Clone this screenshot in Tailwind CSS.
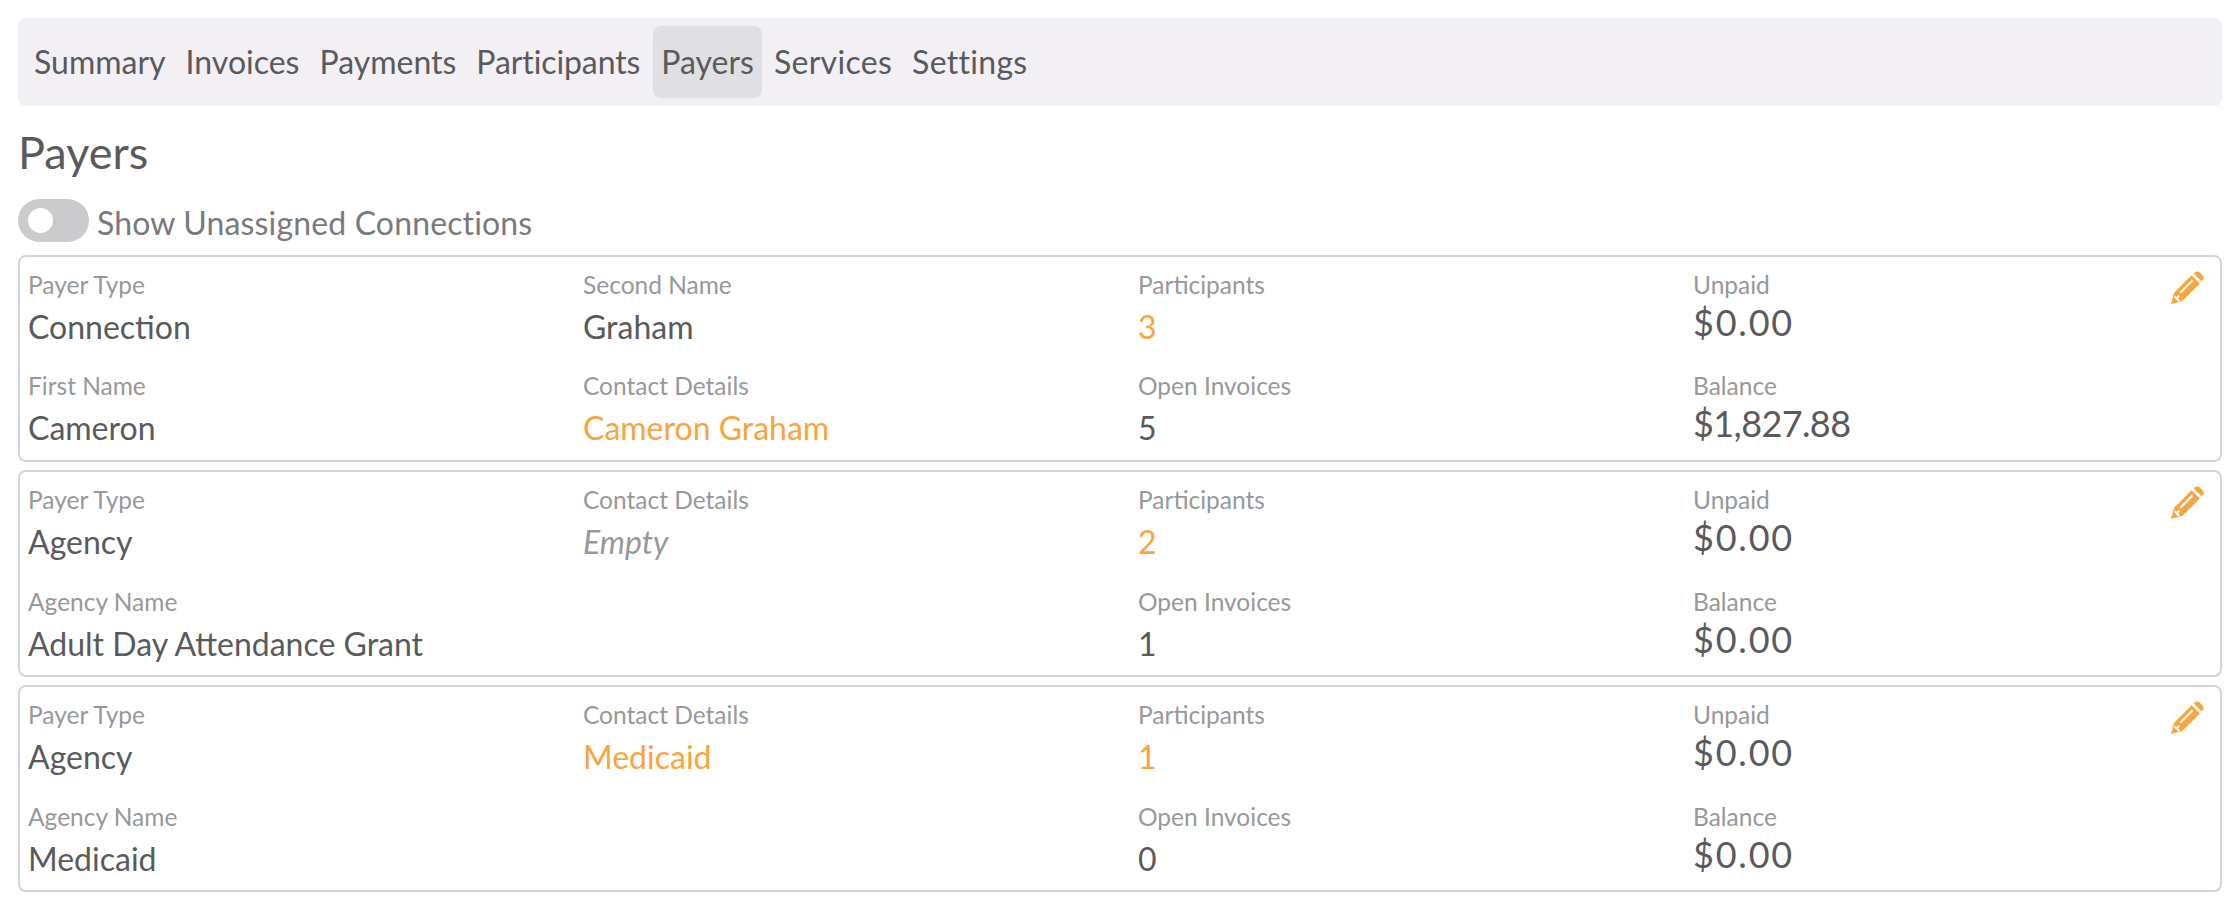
<!DOCTYPE html>
<html lang="en">
<head>
    <meta charset="UTF-8">
    <title>Payers</title>
    <script src="https://cdn.jsdelivr.net/npm/@tailwindcss/browser@4"></script>
</head>
<body class="bg-white font-['Lato','Liberation_Sans',sans-serif] text-[#5a5a5c] h-[900px] overflow-hidden">
    <div class="px-[18px] pt-[18px] pr-[10px]">
        <!-- Tabs -->
        <nav class="flex items-center h-[88px] rounded-[8px] bg-[#f2f0f4] pl-[8px] text-[32px]">
            <a class="h-[64px] flex items-center px-[8px] mr-[4px] rounded-[8px]">Summary</a>
            <a class="h-[64px] flex items-center px-[8px] mr-[4px] rounded-[8px]">Invoices</a>
            <a class="h-[64px] flex items-center px-[8px] mr-[4px] rounded-[8px]">Payments</a>
            <a class="h-[64px] flex items-center px-[8px] mr-[5px] rounded-[8px] tracking-[-0.100px]">Participants</a>
            <a class="h-[72px] flex items-center px-[8px] mr-[4px] rounded-[8px] bg-[#e0dfe3]">Payers</a>
            <a class="h-[64px] flex items-center px-[8px] mr-[4px] rounded-[8px] tracking-[0.300px]">Services</a>
            <a class="h-[64px] flex items-center px-[8px] mr-[4px] rounded-[8px] tracking-[0.300px]">Settings</a>
        </nav>

        <h1 class="text-[45px] leading-[48px] mt-[22px]">Payers</h1>

        <div class="flex items-center mt-[23px] h-[43px] text-[#7a7a7c] text-[32px]">
            <div class="w-[71px] h-[43px] rounded-full bg-[#cbcacd] flex items-center pl-[10px]">
                <div class="w-[25px] h-[25px] rounded-full bg-white"></div>
            </div>
            <span class="ml-[8px] relative top-[2px] tracking-[0.150px]">Show Unassigned Connections</span>
        </div>

        <!-- Connection -->
        <div class="relative mt-[13px] h-[207px] border-2 border-[#d4d4d6] rounded-[8px] pl-[8px] pt-[14px] grid grid-cols-[555px_555px_555px_1fr] grid-rows-[75px_75px] gap-y-[26px]">
            <div><div class="text-[24.500px] leading-[28px] text-[#98989a]">Payer Type</div><div class="text-[32px] leading-[36px] mt-[10px]">Connection</div></div>
            <div><div class="text-[24.500px] leading-[28px] text-[#98989a]">Second Name</div><div class="text-[32px] leading-[36px] mt-[10px]">Graham</div></div>
            <div><div class="text-[24.500px] leading-[28px] text-[#98989a]">Participants</div><div class="text-[32px] leading-[36px] mt-[10px] text-[#f8a540]">3</div></div>
            <div><div class="text-[24.500px] leading-[28px] text-[#98989a]">Unpaid</div><div class="text-[36px] leading-[40px] mt-[3px] tracking-[1.800px]">$0.00</div></div>
            <div><div class="text-[24.500px] leading-[28px] text-[#98989a]">First Name</div><div class="text-[32px] leading-[36px] mt-[10px]">Cameron</div></div>
            <div><div class="text-[24.500px] leading-[28px] text-[#98989a]">Contact Details</div><div class="text-[32px] leading-[36px] mt-[10px] text-[#f8a540]">Cameron Graham</div></div>
            <div><div class="text-[24.500px] leading-[28px] text-[#98989a]">Open Invoices</div><div class="text-[32px] leading-[36px] mt-[10px]">5</div></div>
            <div><div class="text-[24.500px] leading-[28px] text-[#98989a]">Balance</div><div class="text-[36px] leading-[40px] mt-[3px] tracking-[-0.600px]">$1,827.88</div></div>
            <svg class="absolute right-[16px] top-[14px] w-[33px] h-[33px]" viewBox="0 0 32 32"><path fill="#f8a540" d="M0 32 3 21 20 4l8 8-17 17zM22 2.500l1-1c1.500-1.500 3.500-1.500 5 0l2.500 2.500c1.500 1.500 1.500 3.500 0 5l-1 1z"/><path stroke="#fff" stroke-width="2" fill="none" d="M9 21 21 9M3.500 24.500 8 29M8 24l-3 3"/></svg>
        </div>

        <!-- Adult Day Attendance Grant -->
        <div class="relative mt-[8px] h-[207px] border-2 border-[#d4d4d6] rounded-[8px] pl-[8px] pt-[14px] grid grid-cols-[555px_555px_555px_1fr] grid-rows-[75px_75px] gap-y-[27px]">
            <div><div class="text-[24.500px] leading-[28px] text-[#98989a]">Payer Type</div><div class="text-[32px] leading-[36px] mt-[10px]">Agency</div></div>
            <div><div class="text-[24.500px] leading-[28px] text-[#98989a]">Contact Details</div><div class="text-[32px] leading-[36px] mt-[10px] italic text-[#98989a]">Empty</div></div>
            <div><div class="text-[24.500px] leading-[28px] text-[#98989a]">Participants</div><div class="text-[32px] leading-[36px] mt-[10px] text-[#f8a540]">2</div></div>
            <div><div class="text-[24.500px] leading-[28px] text-[#98989a]">Unpaid</div><div class="text-[36px] leading-[40px] mt-[3px] tracking-[1.800px]">$0.00</div></div>
            <div class="col-span-2"><div class="text-[24.500px] leading-[28px] text-[#98989a]">Agency Name</div><div class="text-[32px] leading-[36px] mt-[10px]">Adult Day Attendance Grant</div></div>
            <div><div class="text-[24.500px] leading-[28px] text-[#98989a]">Open Invoices</div><div class="text-[32px] leading-[36px] mt-[10px]">1</div></div>
            <div><div class="text-[24.500px] leading-[28px] text-[#98989a]">Balance</div><div class="text-[36px] leading-[40px] mt-[3px] tracking-[1.800px]">$0.00</div></div>
            <svg class="absolute right-[16px] top-[14px] w-[33px] h-[33px]" viewBox="0 0 32 32"><path fill="#f8a540" d="M0 32 3 21 20 4l8 8-17 17zM22 2.500l1-1c1.500-1.500 3.500-1.500 5 0l2.500 2.500c1.500 1.500 1.500 3.500 0 5l-1 1z"/><path stroke="#fff" stroke-width="2" fill="none" d="M9 21 21 9M3.500 24.500 8 29M8 24l-3 3"/></svg>
        </div>

        <!-- Medicaid -->
        <div class="relative mt-[8px] h-[207px] border-2 border-[#d4d4d6] rounded-[8px] pl-[8px] pt-[14px] grid grid-cols-[555px_555px_555px_1fr] grid-rows-[75px_75px] gap-y-[27px]">
            <div><div class="text-[24.500px] leading-[28px] text-[#98989a]">Payer Type</div><div class="text-[32px] leading-[36px] mt-[10px]">Agency</div></div>
            <div><div class="text-[24.500px] leading-[28px] text-[#98989a]">Contact Details</div><div class="text-[32px] leading-[36px] mt-[10px] text-[#f8a540]">Medicaid</div></div>
            <div><div class="text-[24.500px] leading-[28px] text-[#98989a]">Participants</div><div class="text-[32px] leading-[36px] mt-[10px] text-[#f8a540]">1</div></div>
            <div><div class="text-[24.500px] leading-[28px] text-[#98989a]">Unpaid</div><div class="text-[36px] leading-[40px] mt-[3px] tracking-[1.800px]">$0.00</div></div>
            <div class="col-span-2"><div class="text-[24.500px] leading-[28px] text-[#98989a]">Agency Name</div><div class="text-[32px] leading-[36px] mt-[10px]">Medicaid</div></div>
            <div><div class="text-[24.500px] leading-[28px] text-[#98989a]">Open Invoices</div><div class="text-[32px] leading-[36px] mt-[10px]">0</div></div>
            <div><div class="text-[24.500px] leading-[28px] text-[#98989a]">Balance</div><div class="text-[36px] leading-[40px] mt-[3px] tracking-[1.800px]">$0.00</div></div>
            <svg class="absolute right-[16px] top-[14px] w-[33px] h-[33px]" viewBox="0 0 32 32"><path fill="#f8a540" d="M0 32 3 21 20 4l8 8-17 17zM22 2.500l1-1c1.500-1.500 3.500-1.500 5 0l2.500 2.500c1.500 1.500 1.500 3.500 0 5l-1 1z"/><path stroke="#fff" stroke-width="2" fill="none" d="M9 21 21 9M3.500 24.500 8 29M8 24l-3 3"/></svg>
        </div>
    </div>
</body>
</html>
